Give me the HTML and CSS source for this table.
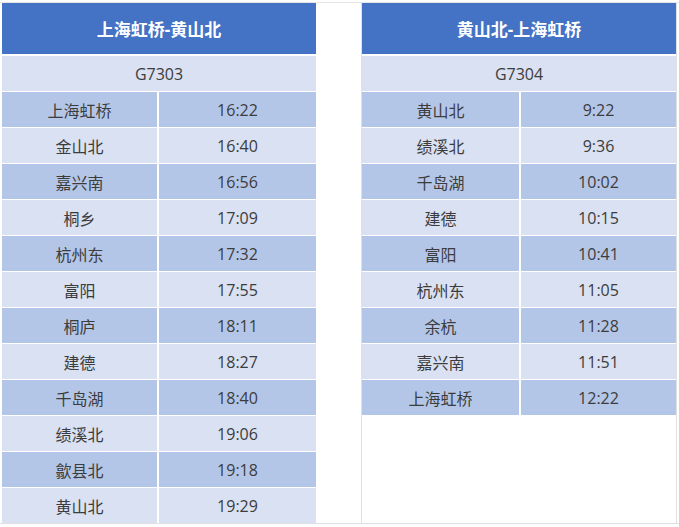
FILE: index.html
```html
<!DOCTYPE html>
<html lang="zh">
<head>
<meta charset="utf-8">
<link rel="stylesheet" href="styles.css">
</head>
<body>
<div class="page">
  <div class="panel panel-left">
    <div class="title">上海虹桥-黄山北</div>
    <div class="train">G7303</div>
    <div class="rows">
      <div class="cell dark">上海虹桥</div><div class="cell dark">16:22</div>
      <div class="cell light">金山北</div><div class="cell light">16:40</div>
      <div class="cell dark">嘉兴南</div><div class="cell dark">16:56</div>
      <div class="cell light">桐乡</div><div class="cell light">17:09</div>
      <div class="cell dark">杭州东</div><div class="cell dark">17:32</div>
      <div class="cell light">富阳</div><div class="cell light">17:55</div>
      <div class="cell dark">桐庐</div><div class="cell dark">18:11</div>
      <div class="cell light">建德</div><div class="cell light">18:27</div>
      <div class="cell dark">千岛湖</div><div class="cell dark">18:40</div>
      <div class="cell light">绩溪北</div><div class="cell light">19:06</div>
      <div class="cell dark">歙县北</div><div class="cell dark">19:18</div>
      <div class="cell light">黄山北</div><div class="cell light">19:29</div>
    </div>
  </div>
  <div class="spacer"></div>
  <div class="panel panel-right">
    <div class="title">黄山北-上海虹桥</div>
    <div class="train">G7304</div>
    <div class="rows">
      <div class="cell dark">黄山北</div><div class="cell dark">9:22</div>
      <div class="cell light">绩溪北</div><div class="cell light">9:36</div>
      <div class="cell dark">千岛湖</div><div class="cell dark">10:02</div>
      <div class="cell light">建德</div><div class="cell light">10:15</div>
      <div class="cell dark">富阳</div><div class="cell dark">10:41</div>
      <div class="cell light">杭州东</div><div class="cell light">11:05</div>
      <div class="cell dark">余杭</div><div class="cell dark">11:28</div>
      <div class="cell light">嘉兴南</div><div class="cell light">11:51</div>
      <div class="cell dark">上海虹桥</div><div class="cell dark">12:22</div>
    </div>
  </div>
</div>
</body>
</html>
```
FILE: styles.css
```css
html, body {
  margin: 0;
  padding: 0;
  background: #ffffff;
}
body {
  font-family: "Open Sans", "Noto Sans CJK SC", sans-serif;
  color: #3c3c3c;
}
.page {
  display: flex;
  margin-top: 2px;
  height: 522px;
  border-top: 1px solid #e6e6e6;
  border-bottom: 1px solid #e0e0e0;
  box-sizing: border-box;
}
.panel {
  display: flex;
  flex-direction: column;
}
.panel-left {
  margin-left: 2px;
  width: 314px;
}
.spacer {
  width: 45px;
}
.panel-right {
  width: 316px;
  border-left: 1px solid #e0e0e0;
  border-right: 1px solid #e0e0e0;
  box-sizing: border-box;
}
.title {
  height: 51px;
  background: #4472c4;
  color: #ffffff;
  font-weight: bold;
  font-size: 17px;
  display: flex;
  align-items: center;
  justify-content: center;
}
.train {
  margin-top: 2px;
  height: 35px;
  background: #d9e1f2;
  font-size: 16px;
  display: flex;
  align-items: center;
  justify-content: center;
}
.rows {
  margin-top: 1px;
  display: grid;
  grid-template-columns: 155px 1fr;
  column-gap: 2px;
  row-gap: 1px;
  grid-auto-rows: 35px;
}
.panel-right .rows {
  grid-template-columns: 157px 1fr;
}
.cell {
  display: flex;
  align-items: center;
  justify-content: center;
  font-size: 16px;
}
.dark {
  background: #b4c6e7;
}
.light {
  background: #d9e1f2;
}
```
